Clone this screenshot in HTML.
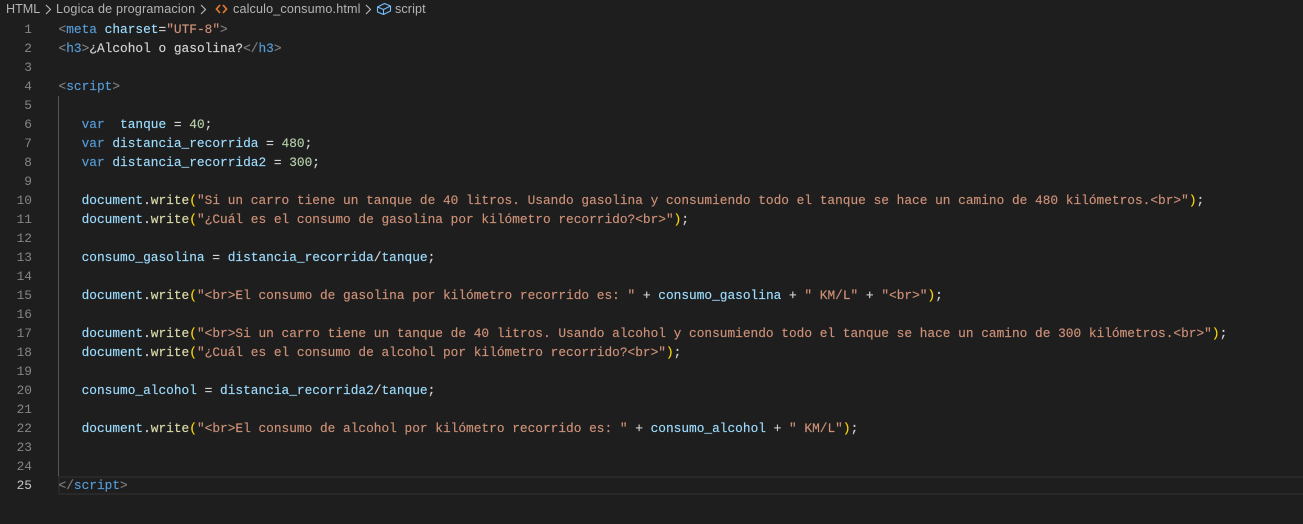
<!DOCTYPE html>
<html lang="es">
<head>
<meta charset="UTF-8">
<title>calculo_consumo.html</title>
<style>
html,body{margin:0;padding:0;background:#1e1e1e;}
body{width:1303px;height:524px;overflow:hidden;position:relative;}
.bc{position:absolute;top:0;height:18px;line-height:18px;font-family:"Liberation Sans",sans-serif;font-size:12.6px;color:#b4b4b4;white-space:nowrap;}
.ic{position:absolute;top:0;}
.ln{position:absolute;left:0;width:32px;text-align:right;height:19px;line-height:19px;font-family:"Liberation Mono",monospace;font-size:12.82px;color:#858585;}
.ln.cur{color:#c6c6c6;}
.code{position:absolute;left:58.5px;height:19px;line-height:19px;font-family:"Liberation Mono",monospace;font-size:12.82px;white-space:pre;color:#d4d4d4;-webkit-text-stroke:.15px;}
.b{color:#808080}.t{color:#569cd6}.a{color:#9cdcfe}.s{color:#ce9178}.n{color:#b5cea8}.f{color:#dcdcaa}.p{color:#ffd700}
#guide{position:absolute;left:58px;top:96px;width:1px;height:380px;background:#555;}
#cur{position:absolute;left:58px;top:476px;width:1245px;height:19px;box-sizing:border-box;border:2px solid #282828;border-right:0;}
</style>
</head>
<body>
<div class="bc" style="left:6px">HTML</div>
<svg class="ic" style="left:42.5px" width="10" height="18" viewBox="0 0 10 18"><path d="M3 5L7.5 9.5L3 14" fill="none" stroke="#b4b4b4" stroke-width="1.2"/></svg>
<div class="bc" style="left:56px;letter-spacing:.19px">Logica de programacion</div>
<svg class="ic" style="left:197.5px" width="10" height="18" viewBox="0 0 10 18"><path d="M3 5L7.5 9.5L3 14" fill="none" stroke="#b4b4b4" stroke-width="1.2"/></svg>
<svg class="ic" style="left:215px" width="13" height="18" viewBox="0 0 13 18"><path d="M5 5L1.5 9L5 13M8 5L11.5 9L8 13" fill="none" stroke="#e37933" stroke-width="1.7"/></svg>
<div class="bc" style="left:233px;letter-spacing:.15px">calculo_consumo.html</div>
<svg class="ic" style="left:362.5px" width="10" height="18" viewBox="0 0 10 18"><path d="M3 5L7.5 9.5L3 14" fill="none" stroke="#b4b4b4" stroke-width="1.2"/></svg>
<svg class="ic" style="left:376px" width="16" height="18" viewBox="0 0 16 18"><path d="M8.5 3.5L14.5 6V11L7.5 14.5L1.5 12V7ZM1.5 7L7.5 9.5L14.5 6M7.5 9.5V14.5" fill="none" stroke="#75beff" stroke-width="1.1" stroke-linejoin="round"/></svg>
<div class="bc" style="left:395px;letter-spacing:.1px">script</div>

<div id="guide"></div>
<div id="cur"></div>

<div class="ln" style="top:20px">1</div>
<div class="ln" style="top:39px">2</div>
<div class="ln" style="top:58px">3</div>
<div class="ln" style="top:77px">4</div>
<div class="ln" style="top:96px">5</div>
<div class="ln" style="top:115px">6</div>
<div class="ln" style="top:134px">7</div>
<div class="ln" style="top:153px">8</div>
<div class="ln" style="top:172px">9</div>
<div class="ln" style="top:191px">10</div>
<div class="ln" style="top:210px">11</div>
<div class="ln" style="top:229px">12</div>
<div class="ln" style="top:248px">13</div>
<div class="ln" style="top:267px">14</div>
<div class="ln" style="top:286px">15</div>
<div class="ln" style="top:305px">16</div>
<div class="ln" style="top:324px">17</div>
<div class="ln" style="top:343px">18</div>
<div class="ln" style="top:362px">19</div>
<div class="ln" style="top:381px">20</div>
<div class="ln" style="top:400px">21</div>
<div class="ln" style="top:419px">22</div>
<div class="ln" style="top:438px">23</div>
<div class="ln" style="top:457px">24</div>
<div class="ln cur" style="top:476px">25</div>

<div class="code" style="top:20px"><span class="b">&lt;</span><span class="t">meta</span> <span class="a">charset</span>=<span class="s">"UTF-8"</span><span class="b">&gt;</span></div>
<div class="code" style="top:39px"><span class="b">&lt;</span><span class="t">h3</span><span class="b">&gt;</span>¿Alcohol o gasolina?<span class="b">&lt;/</span><span class="t">h3</span><span class="b">&gt;</span></div>
<div class="code" style="top:77px"><span class="b">&lt;</span><span class="t">script</span><span class="b">&gt;</span></div>
<div class="code" style="top:115px">   <span class="t">var</span>  <span class="a">tanque</span> = <span class="n">40</span>;</div>
<div class="code" style="top:134px">   <span class="t">var</span> <span class="a">distancia_recorrida</span> = <span class="n">480</span>;</div>
<div class="code" style="top:153px">   <span class="t">var</span> <span class="a">distancia_recorrida2</span> = <span class="n">300</span>;</div>
<div class="code" style="top:191px">   <span class="a">document</span>.<span class="f">write</span><span class="p">(</span><span class="s">"Si un carro tiene un tanque de 40 litros. Usando gasolina y consumiendo todo el tanque se hace un camino de 480 kilómetros.&lt;br&gt;"</span><span class="p">)</span>;</div>
<div class="code" style="top:210px">   <span class="a">document</span>.<span class="f">write</span><span class="p">(</span><span class="s">"¿Cuál es el consumo de gasolina por kilómetro recorrido?&lt;br&gt;"</span><span class="p">)</span>;</div>
<div class="code" style="top:248px">   <span class="a">consumo_gasolina</span> = <span class="a">distancia_recorrida</span>/<span class="a">tanque</span>;</div>
<div class="code" style="top:286px">   <span class="a">document</span>.<span class="f">write</span><span class="p">(</span><span class="s">"&lt;br&gt;El consumo de gasolina por kilómetro recorrido es: "</span> + <span class="a">consumo_gasolina</span> + <span class="s">" KM/L"</span> + <span class="s">"&lt;br&gt;"</span><span class="p">)</span>;</div>
<div class="code" style="top:324px">   <span class="a">document</span>.<span class="f">write</span><span class="p">(</span><span class="s">"&lt;br&gt;Si un carro tiene un tanque de 40 litros. Usando alcohol y consumiendo todo el tanque se hace un camino de 300 kilómetros.&lt;br&gt;"</span><span class="p">)</span>;</div>
<div class="code" style="top:343px">   <span class="a">document</span>.<span class="f">write</span><span class="p">(</span><span class="s">"¿Cuál es el consumo de alcohol por kilómetro recorrido?&lt;br&gt;"</span><span class="p">)</span>;</div>
<div class="code" style="top:381px">   <span class="a">consumo_alcohol</span> = <span class="a">distancia_recorrida2</span>/<span class="a">tanque</span>;</div>
<div class="code" style="top:419px">   <span class="a">document</span>.<span class="f">write</span><span class="p">(</span><span class="s">"&lt;br&gt;El consumo de alcohol por kilómetro recorrido es: "</span> + <span class="a">consumo_alcohol</span> + <span class="s">" KM/L"</span><span class="p">)</span>;</div>
<div class="code" style="top:476px"><span class="b">&lt;/</span><span class="t">script</span><span class="b">&gt;</span></div>
</body>
</html>
